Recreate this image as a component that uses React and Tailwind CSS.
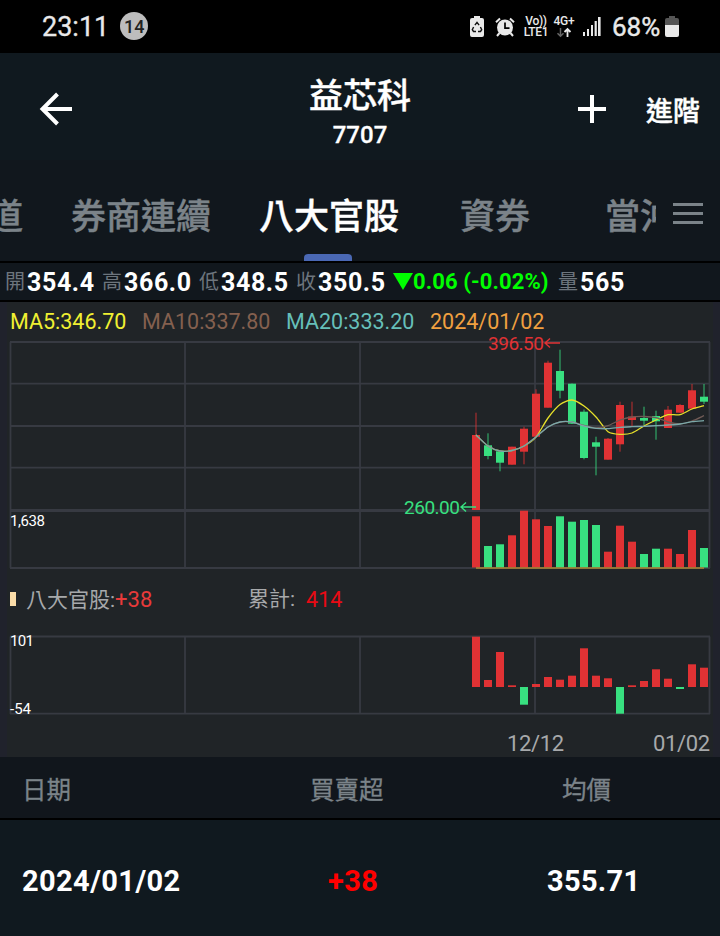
import React from "react";

const UP = "#e03234";
const DOWN = "#38e080";
const GRID = "#373a42";

// x of the first candle and the distance between candles
const START_X = 476;
const STEP = 12;
const COLUMNS = [10.5, 185, 360, 535, 709.5];

// [high, open/close top, open/close bottom, low, up?, volume top]
const candles = [
  [412.7, 435, 510, 510, true, 516.3],
  [433.3, 445.3, 456, 459.3, false, 546],
  [451, 451.3, 462.7, 471.3, false, 544.3],
  [446.7, 446.7, 464.7, 464.7, true, 535.3],
  [426.7, 428.7, 451.7, 464.3, true, 510.7],
  [389.3, 393.7, 436.7, 437.5, true, 519.3],
  [360.7, 362.7, 407.7, 407.7, true, 526],
  [349.7, 371, 390.7, 398.3, false, 516.3],
  [383.5, 383.7, 423.7, 424, false, 521.7],
  [409.5, 411.7, 458, 459.3, false, 520],
  [436.7, 442.3, 446.7, 475.3, false, 525],
  [438, 438.7, 459.7, 459.7, true, 551.7],
  [401.7, 405, 444.3, 451.7, true, 525.7],
  [401.7, 416.5, 420, 426.7, true, 541.7],
  [406.7, 418, 420.7, 425, false, 554],
  [410.7, 416, 421.3, 439.7, false, 548.7],
  [406, 409.7, 428, 428, true, 548.7],
  [404, 405, 412.7, 412.7, true, 554],
  [384, 390.3, 408.7, 408.7, true, 530],
  [384, 396.7, 401.7, 404, false, 548],
];

const netBars = [
  636.7, 680, 652, 685.3, 704.7, 684, 677, 679.7, 675.7, 648.3, 675.7, 678.3,
  713.7, 685.3, 681, 669.3, 678.7, 689, 664.3, 667.7,
];
const ZERO_Y = 687;

const ma5 = [
  435, 446, 451, 450.5, 446, 437, 418, 404.5, 400, 406, 417, 431.7, 434.3, 433,
  426, 420, 414.7, 414.7, 409, 405.7,
];
const ma10 = [
  435, 446, 451, 450.5, 446, 437, 427, 422, 422, 425.5, 428, 425.7, 420, 417,
  416.5, 417.7, 422, 424, 421, 415.7,
];
const ma20 = [
  435, 446, 451, 450.5, 446, 437, 427, 422, 422, 426, 428.3, 428.7, 427.3,
  426.7, 426.3, 425.7, 425, 424, 421.7, 420.7,
];

// Smooth curve through the averages (Catmull-Rom converted to beziers)
const toPath = (values) => {
  const at = (i) => {
    const k = Math.max(0, Math.min(values.length - 1, i));
    return [START_X + k * STEP, values[k]];
  };
  let d = `M${at(0).join(" ")}`;
  for (let i = 0; i < values.length - 1; i++) {
    const [p0, p1, p2, p3] = [at(i - 1), at(i), at(i + 1), at(i + 2)];
    d += `C${p1[0] + (p2[0] - p0[0]) / 8} ${p1[1] + (p2[1] - p0[1]) / 8} ${
      p2[0] - (p3[0] - p1[0]) / 8
    } ${p2[1] - (p3[1] - p1[1]) / 8} ${p2[0]} ${p2[1]}`;
  }
  return d;
};

function StatusBar() {
  return (
    <div className="flex h-[53px] items-center bg-black pr-[41px] pl-[42px] text-[#e9e9e9]">
      <span className="pt-[2px] text-[27px] leading-none [-webkit-text-stroke:0.3px]">
        23:11
      </span>
      <span className="ml-[11px] flex size-7 items-center justify-center rounded-full bg-[#bdbdbd] text-[18px] font-medium text-[#222] -mt-px">
        14
      </span>
      <div className="ml-auto flex items-center">
        <svg className="-mt-px" width="14" height="21" viewBox="0 0 14 21">
          <path
            d="M4 0h6v2h2a2 2 0 0 1 2 2v15a2 2 0 0 1-2 2H2a2 2 0 0 1-2-2V4a2 2 0 0 1 2-2h2z"
            fill="#e9e9e9"
          />
          <path
            d="M4.9 9.2 7 6.4l2.1 2.8M10.4 11l1.3 2.7-1.2 1.8H8M6 15.5H3.5l-1.2-1.8L3.6 11"
            fill="none"
            stroke="#111"
            strokeWidth="1.4"
          />
        </svg>
        <svg className="ml-[11px]" width="20" height="20" viewBox="0 0 20 20">
          <circle cx="10" cy="10.5" r="8" fill="#e9e9e9" />
          <path
            d="M1 5.2 5 1.5M19 5.2 15 1.5M4.5 16 2 19M15.5 16l2.5 3"
            stroke="#e9e9e9"
            strokeWidth="2"
          />
          <path d="M10 5.5v5.7h4.5" fill="none" stroke="#000" strokeWidth="1.7" />
        </svg>
        <div className="ml-[8px] flex w-[26px] flex-col items-center text-[12px] leading-[11px] font-medium tracking-[-0.3px]">
          <span className="whitespace-nowrap">Vo))</span>
          <span className="whitespace-nowrap">LTE1</span>
        </div>
        <div className="ml-1 flex w-[22px] flex-col items-center">
          <span className="text-[12px] leading-[11px] font-medium tracking-[-0.2px]">
            4G+
          </span>
          <svg width="16" height="11" viewBox="0 0 16 11">
            <path
              d="M4.5 1v8M1.5 6.2l3 3 3-3"
              fill="none"
              stroke="#666"
              strokeWidth="1.5"
            />
            <path
              d="M11.5 10V2M8.5 5l3-3 3 3"
              fill="none"
              stroke="#e9e9e9"
              strokeWidth="1.8"
            />
          </svg>
        </div>
        <svg className="ml-2" width="20" height="20" viewBox="0 0 20 20">
          <g fill="#e9e9e9">
            <rect x="0" y="15" width="2" height="4" />
            <rect x="4" y="12" width="2" height="7" />
            <rect x="8" y="8" width="2" height="11" />
            <rect x="11.6" y="4" width="2.2" height="15" />
            <rect x="15" y="0" width="2.6" height="19" />
          </g>
        </svg>
        <span className="ml-[9px] w-[49px] text-[26px] leading-none [-webkit-text-stroke:0.4px]">
          68%
        </span>
        <svg className="-mt-px ml-[4px]" width="14" height="21" viewBox="0 0 14 21">
          <path
            d="M4 0h6v2h2a2 2 0 0 1 2 2v5H0V4a2 2 0 0 1 2-2h2z"
            fill="#555"
          />
          <path d="M0 9h14v10a2 2 0 0 1-2 2H2a2 2 0 0 1-2-2z" fill="#e9e9e9" />
        </svg>
      </div>
    </div>
  );
}

function Header() {
  return (
    <header className="grid h-[107px] grid-cols-[1fr_auto_1fr] items-center bg-[#10191f] px-5 text-white">
      <svg
        className="mt-[5px] ml-[19px]"
        width="34"
        height="34"
        viewBox="0 0 34 34"
        fill="none"
        stroke="currentColor"
        strokeWidth="4"
      >
        <path d="M33 17H4M18.5 2 3.5 17l15 15" />
      </svg>
      <div className="flex flex-col items-center pt-3">
        <h1 className="text-[34px] leading-[44px] font-medium [-webkit-text-stroke:0.4px]">
          益芯科
        </h1>
        <span className="text-[24px] leading-[34px] font-medium [-webkit-text-stroke:0.3px]">
          7707
        </span>
      </div>
      <div className="mt-[5px] flex items-center justify-end gap-10">
        <svg
          width="28"
          height="28"
          viewBox="0 0 28 28"
          stroke="currentColor"
          strokeWidth="4"
        >
          <path d="M14 0v28M0 14h28" />
        </svg>
        <span className="pt-1.5 text-[27px] leading-none font-medium [-webkit-text-stroke:0.4px]">
          進階
        </span>
      </div>
    </header>
  );
}

function Tabs() {
  return (
    <nav className="flex h-[101px] items-stretch bg-[#11171d] text-[35px] text-[#7b8389]">
      <div className="flex w-[656px] items-stretch overflow-hidden font-medium whitespace-nowrap [-webkit-text-stroke:0.4px]">
        <span className="-ml-[12px] w-[83px] shrink-0 pt-[32px]">道</span>
        <span className="w-[188px] shrink-0 pt-[32px]">券商連續</span>
        <span className="flex w-[201px] shrink-0 flex-col justify-between text-white">
          <span className="pt-[32px]">八大官股</span>
          <span className="ml-[45px] h-[7px] w-12 rounded-t bg-[#4a68b4]" />
        </span>
        <span className="w-[145px] shrink-0 pt-[32px]">資券</span>
        <span className="shrink-0 pt-[32px]">當沖</span>
      </div>
      <div className="flex flex-col gap-1.5 pt-[43px] pl-[17px]">
        <span className="h-[3px] w-[30px] bg-[#7b8389]" />
        <span className="h-[3px] w-[30px] bg-[#7b8389]" />
        <span className="h-[3px] w-[30px] bg-[#7b8389]" />
      </div>
    </nav>
  );
}

function Quote({ label, value, className }) {
  return (
    <div className={`flex shrink-0 items-center ${className}`}>
      <span className="w-[22px] text-[20px] text-[#6d757d]">{label}</span>
      <span className="pt-[2px] text-[25px] font-bold tracking-[0.6px] text-white">
        {value}
      </span>
    </div>
  );
}

function QuoteBar() {
  return (
    <div className="flex h-[41px] items-center border-y-2 border-black bg-[#11171d] pl-[5px] whitespace-nowrap">
      <Quote label="開" value="354.4" className="w-[97px]" />
      <Quote label="高" value="366.0" className="w-[97px]" />
      <Quote label="低" value="348.5" className="w-[97px]" />
      <Quote label="收" value="350.5" className="w-[97px]" />
      <div className="flex w-[165px] shrink-0 items-center text-[22px] font-bold tracking-[0.1px] text-[#0f0]">
        <svg width="20" height="17" viewBox="0 0 20 17" fill="currentColor">
          <path d="M0 0h20L10 17z" />
        </svg>
        0.06 (-0.02%)
      </div>
      <Quote label="量" value="565" className="" />
    </div>
  );
}

function PriceChart() {
  return (
    <svg
      className="block"
      width="720"
      height="242"
      viewBox="0 332 720 242"
      fontSize="19"
    >
      <g stroke={GRID} strokeWidth="1.8">
        {COLUMNS.map((x) => (
          <line key={x} x1={x} x2={x} y1="342" y2="568" />
        ))}
        {[342, 383.7, 426, 467.7, 568].map((y) => (
          <line key={y} x1="10" x2="710" y1={y} y2={y} />
        ))}
        <line x1="10" x2="710" y1="510.5" y2="510.5" strokeWidth="3" />
      </g>
      {candles.map(([high, top, bottom, low, up, volume], i) => {
        const x = START_X + i * STEP;
        const color = up ? UP : DOWN;
        return (
          <g key={x} fill={color}>
            <rect x={x - 0.7} y={high} width="1.4" height={low - high} opacity="0.6" />
            <rect x={x - 4} y={top} width="8" height={bottom - top} />
            <rect x={x - 4} y={volume} width="8" height={567.5 - volume} />
          </g>
        );
      })}
      <path d="M476 567.9h228" stroke="#b08a35" strokeWidth="1.5" />
      <g fill="none" strokeWidth="1.3">
        <path d={toPath(ma5)} stroke="#e6e02a" />
        <path d={toPath(ma10)} stroke="#6f5a55" />
        <path d={toPath(ma20)} stroke="#7ba8a8" />
      </g>
      <text x="488" y="350" fill={UP} textLength="56">
        396.50
      </text>
      <path d="M560 343h-15M550 338.5l-5 4.5 5 4.5" fill="none" stroke={UP} strokeWidth="1.4" />
      <text x="404" y="514" fill={DOWN} textLength="56">
        260.00
      </text>
      <path d="M476 507h-15M466 502.5l-5 4.5 5 4.5" fill="none" stroke={DOWN} strokeWidth="1.4" />
      <text x="10" y="526" fill="#fff" fontSize="15" textLength="35">
        1,638
      </text>
    </svg>
  );
}

function NetChart() {
  return (
    <svg
      className="block"
      width="720"
      height="127"
      viewBox="0 630 720 127"
      fontSize="15"
    >
      <g stroke={GRID} strokeWidth="1.8">
        {COLUMNS.map((x) => (
          <line key={x} x1={x} x2={x} y1="636.5" y2="714" />
        ))}
        <line x1="10" x2="710" y1="636.5" y2="636.5" />
        <line x1="10" x2="710" y1="713.7" y2="713.7" />
      </g>
      {netBars.map((y, i) => (
        <rect
          key={i}
          x={START_X - 4 + i * STEP}
          y={Math.min(y, ZERO_Y)}
          width="8"
          height={Math.abs(ZERO_Y - y)}
          fill={y < ZERO_Y ? UP : DOWN}
        />
      ))}
      <g fill="#fff">
        <text x="10" y="646" textLength="24">101</text>
        <text x="10" y="714" textLength="21">-54</text>
      </g>
      <g fill="#a7a9ab" fontSize="22">
        <text x="507" y="751" textLength="57">12/12</text>
        <text x="653" y="751" textLength="57">01/02</text>
      </g>
    </svg>
  );
}

function Charts() {
  return (
    <section className="border-x-[7px] border-[#20222c] bg-[#202427]">
      <div className="-mx-[7px]">
        <div className="flex h-[30px] items-end pl-[10px] text-[21.5px] leading-[21px] whitespace-nowrap">
          <span className="w-[132px] text-[#f0f032]">MA5:346.70</span>
          <span className="w-[144px] text-[#84604f]">MA10:337.80</span>
          <span className="w-[144px] text-[#66bfb9]">MA20:333.20</span>
          <span className="text-[#f0a040]">2024/01/02</span>
        </div>
        <PriceChart />
        <div className="flex h-14 items-center pb-[5px] pl-[10px] text-[21px] text-[#a7a9ab]">
          <span className="mb-[2px] h-[14px] w-[6px] bg-[#fadca8]" />
          <span className="ml-[10px] w-[222px] pt-[1px]">
            八大官股:
            <span className="text-[22px] text-[#e83a3a]">+38</span>
          </span>
          <span className="pt-[1px]">累計:</span>
          <span className="ml-[11px] pt-px text-[21.5px] text-[#e80a14]">414</span>
        </div>
        <NetChart />
      </div>
    </section>
  );
}

function HistoryTable() {
  return (
    <div>
      <div className="flex h-[63px] items-center border-b-2 border-black bg-[#11161c] pt-[7px] pl-[22px] text-[24.5px] text-[#7b8389] [-webkit-text-stroke:0.3px]">
        <span className="w-[288px]">日期</span>
        <span className="w-[252px]">買賣超</span>
        <span>均價</span>
      </div>
      <div className="flex h-[116px] items-center bg-[#10191f] pt-[7px] pl-[22px] text-[29px] font-bold text-white">
        <span className="w-[306px] tracking-[0.4px]">2024/01/02</span>
        <span className="w-[219px] tracking-[0.4px] text-[#f00]">+38</span>
        <span className="tracking-[0.3px]">355.71</span>
      </div>
    </div>
  );
}

export default function App() {
  return (
    <div className="h-[936px] w-[720px] overflow-hidden bg-[#10191f] font-[Roboto,'Noto_Sans_CJK_TC',sans-serif]">
      <StatusBar />
      <Header />
      <Tabs />
      <QuoteBar />
      <Charts />
      <HistoryTable />
    </div>
  );
}
